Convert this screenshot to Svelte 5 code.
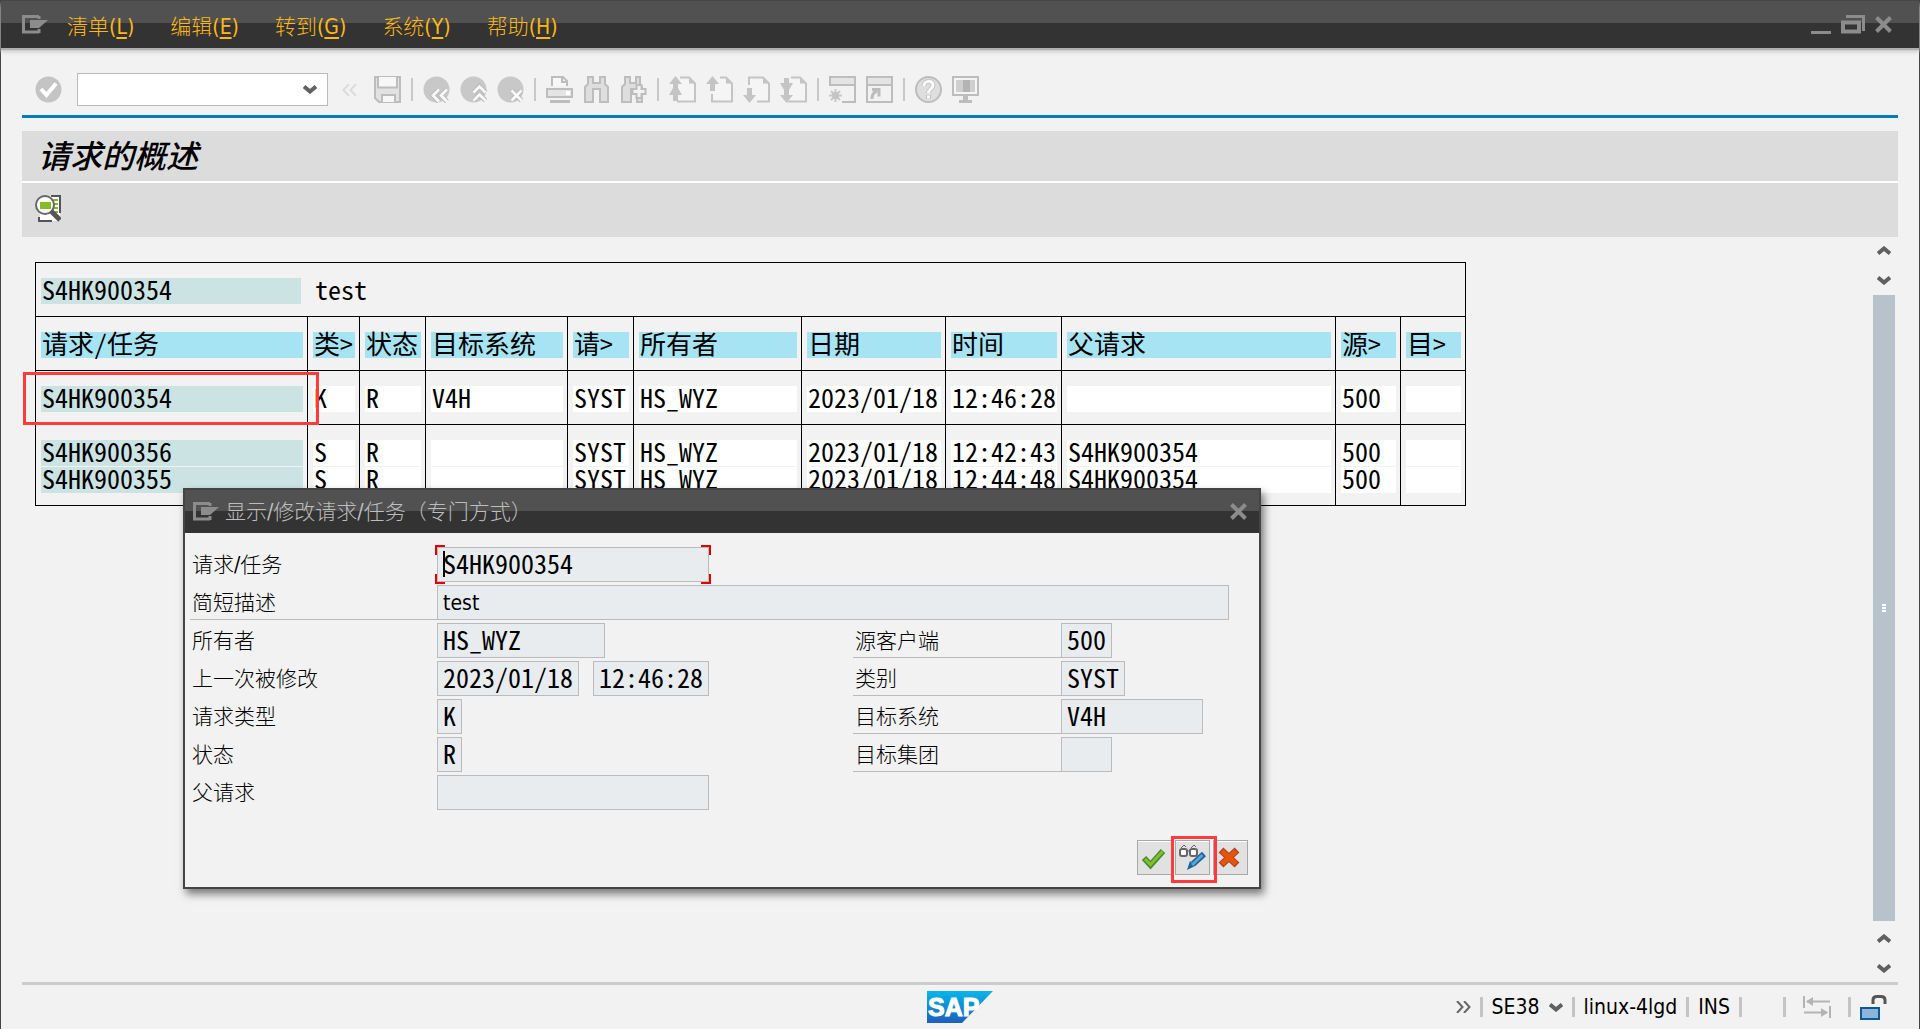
<script>
  const menus = [
    ['清单', 'L'],
    ['编辑', 'E'],
    ['转到', 'G'],
    ['系统', 'Y'],
    ['帮助', 'H'],
  ];

  const tools = [
    'save', '|', 'back', 'exit', 'cancel', '|', 'print', 'find', 'findnext', '|',
    'first', 'prev', 'next', 'last', '|', 'session', 'shortcut', '|', 'help', 'monitor',
  ];

  const toolNames = {
    save: '保存', back: '返回', exit: '退出', cancel: '取消', print: '打印', find: '查找',
    findnext: '继续查找', first: '第一页', prev: '上一页', next: '下一页', last: '最后一页',
    session: '新建会话', shortcut: '快捷方式', help: '帮助', monitor: '定制布局',
  };

  const widths = [272, 52, 66, 142, 66, 168, 144, 116, 274, 65, 65];
  const heads = ['请求/任务', '类>', '状态', '目标系统', '请>', '所有者', '日期', '时间', '父请求', '源>', '目>'];
  const groups = [
    [['S4HK900354', 'K', 'R', 'V4H', 'SYST', 'HS_WYZ', '2023/01/18', '12:46:28', '', '500', '']],
    [
      ['S4HK900356', 'S', 'R', '', 'SYST', 'HS_WYZ', '2023/01/18', '12:42:43', 'S4HK900354', '500', ''],
      ['S4HK900355', 'S', 'R', '', 'SYST', 'HS_WYZ', '2023/01/18', '12:44:48', 'S4HK900354', '500', ''],
    ],
  ];

  let form = $state({
    request: 'S4HK900354', text: 'test', owner: 'HS_WYZ', date: '2023/01/18', time: '12:46:28',
    type: 'K', status: 'R', parent: '', client: '500', category: 'SYST', target: 'V4H', group: '',
  });
</script>

{#snippet chevron(up)}
  <svg class="chevron" viewBox="0 0 14 9" aria-hidden="true">
    {#if up}
      <path d="M1 7.5 7 2.5l6 5" />
    {:else}
      <path d="M1 1.5l6 5 6-5" />
    {/if}
  </svg>
{/snippet}

{#snippet menuIcon()}
  <svg class="menu-icon" viewBox="0 0 26 19" aria-hidden="true">
    <path d="M17 1.5H1.5v15.5H17M17 1v3M17 14v4" fill="none" stroke="#8c8c8c" stroke-width="3" />
    <path d="M8 5h18l-9 8H8z" fill="#8c8c8c" />
  </svg>
{/snippet}

{#snippet closeIcon()}
  <svg class="close-icon" viewBox="0 0 17 17" aria-hidden="true">
    <path d="M1.5 1.5l14 14M15.5 1.5l-14 14" stroke="#8c8c8c" stroke-width="4" />
  </svg>
{/snippet}

{#snippet page()}
  <path d="M11 1.5h9l6 6v18H8" fill="#f5f5f5" stroke="#c4c4c4" stroke-width="2" />
  <path d="M20 1l6.5 6.5H20z" fill="#c4c4c4" />
{/snippet}

{#snippet toolIcon(name)}
  <svg class="tool-icon" viewBox="0 0 27 27" aria-hidden="true">
    {#if name === 'save'}
      <path d="M1 1h25v25H5l-4-4z" fill="#e2e2e2" stroke="#bdbdbd" stroke-width="2" />
      <path d="M4 1v10.5h19V1" fill="#f7f7f7" stroke="#bdbdbd" stroke-width="2" />
      <path d="M8 26v-7h13v7" fill="#f7f7f7" stroke="#bdbdbd" stroke-width="2" />
    {:else if name === 'back' || name === 'exit' || name === 'cancel'}
      <circle cx="13.5" cy="13.5" r="13" fill="#c8c8c8" />
      {#each ['#bdbdbd', '#fafafa'] as tone, i}
        <g fill="none" stroke={tone} stroke-width={i ? 2.6 : 5}>
          {#if name === 'back'}<path d="M16 13.5l-6 6 6 6M24 13.5l-6 6 6 6" />{/if}
          {#if name === 'exit'}<path d="M13.5 16.5l6-6 6 6M13.5 24.5l6-6 6 6" />{/if}
          {#if name === 'cancel'}<path d="M14.5 14.5l10 10M24.5 14.5l-10 10" />{/if}
        </g>
      {/each}
    {:else if name === 'print'}
      <path d="M6 10V1h11l4 4v5M16 1v5h5" fill="#f7f7f7" stroke="#bdbdbd" stroke-width="2" />
      <path d="M1 13h25v8H1z" fill="#e4e4e4" stroke="#bdbdbd" stroke-width="2" />
      <path d="M20 15h4v4h-4z" fill="#fff" />
      <path d="M4 25.5h20" stroke="#bdbdbd" stroke-width="3" />
    {:else if name === 'find'}
      <path d="M5 1h5v6h7V1h5v7l3 3v15h-8V13h-7v13H2V11l3-3z" fill="#dedede" stroke="#bdbdbd" stroke-width="2" />
    {:else if name === 'findnext'}
      <path d="M5 1h5v6h6V1h4v7l2 3v15h-5V13h-6v13H2V11l3-3z" fill="#dedede" stroke="#bdbdbd" stroke-width="2" />
      <path d="M16.5 9h5v4h4v5h-4v4h-5v-4h-4v-5h4z" fill="#f2f2f2" stroke="#bdbdbd" stroke-width="2" />
    {:else if name === 'first'}
      {@render page()}
      <path d="M0 8l6.5-8L13 8H9v4l4 7H9v6H4v-6H0l4-7V8z" fill="#c4c4c4" />
    {:else if name === 'prev'}
      <path d="M14 1.5h6l6 6v18H6V18" fill="#f5f5f5" stroke="#c4c4c4" stroke-width="2" />
      <path d="M20 1l6.5 6.5H20zM0 8l6.5-8L13 8H9v7H4V8z" fill="#c4c4c4" />
    {:else if name === 'next'}
      <path d="M6 9V1.5h14l6 6v18H14" fill="#f5f5f5" stroke="#c4c4c4" stroke-width="2" />
      <path d="M20 1l6.5 6.5H20zM0 19h4v-7h5v7h4l-6.5 8z" fill="#c4c4c4" />
    {:else if name === 'last'}
      {@render page()}
      <path d="M4 2h5v5h4l-4 7v5h4l-6.5 8L0 19h4v-5L0 7h4z" fill="#c4c4c4" />
    {:else if name === 'session'}
      <path d="M1 10V1h25v25H13" fill="none" stroke="#bdbdbd" stroke-width="2" />
      <path d="M2 2h23v6H2z" fill="#e4e4e4" />
      <path d="M1 9h25" stroke="#bdbdbd" stroke-width="2" />
      <path d="M6.5 13v13M0 19.5h13M2 15l9 9M11 15l-9 9" stroke="#c8c8c8" stroke-width="2" />
      <circle cx="6.5" cy="19.5" r="3.5" fill="#c4c4c4" />
    {:else if name === 'shortcut'}
      <path d="M1 1h25v25H1z" fill="#f2f2f2" stroke="#bdbdbd" stroke-width="2" />
      <path d="M2 2h23v6H2z" fill="#e4e4e4" />
      <path d="M1 9h25" stroke="#bdbdbd" stroke-width="2" />
      <path d="M6 23c0-5 2-7 5-8M6 13.5h7v7" fill="none" stroke="#bdbdbd" stroke-width="3" />
    {:else if name === 'help'}
      <circle cx="13.5" cy="13.5" r="12.5" fill="#dedede" stroke="#bdbdbd" stroke-width="2" />
      <path d="M9 10c0-6 9-6 9-1 0 4-4.5 4-4.5 8M13.5 19v4" fill="none" stroke="#c4c4c4" stroke-width="5" />
      <path d="M9 10c0-6 9-6 9-1 0 4-4.5 4-4.5 8M13.5 19.5v3" fill="none" stroke="#fafafa" stroke-width="3" />
    {:else if name === 'monitor'}
      <path d="M1 1h25v18H1z" fill="#f5f5f5" stroke="#bdbdbd" stroke-width="2" />
      <path d="M4 4h19v12H4z" fill="#cfcfcf" />
      <path d="M11 4h7v12h-7z" fill="#b4b4b4" />
      <path d="M11 20h5v4h4v3H7v-3h4z" fill="#bdbdbd" />
    {/if}
  </svg>
{/snippet}

<div class="window">
  <header class="titlebar">
    <button class="bare" aria-label="系统菜单">{@render menuIcon()}</button>
    <nav class="menus">
      {#each menus as [label, key]}
        <button class="bare menu">{label}(<u>{key}</u>)</button>
      {/each}
    </nav>
    <div class="controls">
      <button class="bare" aria-label="最小化">
        <svg class="min-icon" viewBox="0 0 20 20" aria-hidden="true"><path d="M0 17.5h20" stroke="#8c8c8c" stroke-width="3" /></svg>
      </button>
      <button class="bare" aria-label="还原">
        <svg class="restore-icon" viewBox="0 0 24 20" aria-hidden="true">
          <path d="M5 1.5h17.5V16" fill="none" stroke="#8c8c8c" stroke-width="3" />
          <path d="M2 7.5h16v9H2z" fill="none" stroke="#8c8c8c" stroke-width="4" />
        </svg>
      </button>
      <button class="bare" aria-label="关闭">{@render closeIcon()}</button>
    </div>
  </header>

  <div class="toolbar">
    <button class="bare enter" aria-label="回车">
      <svg class="tool-icon" viewBox="0 0 27 27" aria-hidden="true">
        <circle cx="13.5" cy="13.5" r="13" fill="#c4c4c4" />
        <path d="M6 13l5.5 6L21 7.5" fill="none" stroke="#fff" stroke-width="4" />
      </svg>
    </button>
    <div class="command">
      <input aria-label="命令" />
      {@render chevron(false)}
    </div>
    <button class="bare collapse" aria-label="折叠">
      <svg class="collapse-icon" viewBox="0 0 15 12" aria-hidden="true"><path d="M7 0L1.5 6 7 12M14 0L8.5 6l5.5 6" fill="none" stroke="#dcdcdc" stroke-width="2" /></svg>
    </button>
    {#each tools as tool}
      {#if tool === '|'}
        <span class="sep"></span>
      {:else}
        <button class="bare" aria-label={toolNames[tool]}>{@render toolIcon(tool)}</button>
      {/if}
    {/each}
  </div>

  <h1>请求的概述</h1>
  <div class="appbar">
    <button class="bare" aria-label="选择明细">
      <svg class="detail-icon" viewBox="0 0 26 27" aria-hidden="true">
        <path d="M5 1h20v25H5z" fill="#fff" />
        <path d="M16 1h9v17M4 22v4h13" fill="none" stroke="#555" stroke-width="2" />
        <path d="M18 5h5M19 9h4M19 13h4M18 17h5" stroke="#7fba28" stroke-width="2" />
        <circle cx="10" cy="10" r="9" fill="#fff" stroke="#666" stroke-width="2" />
        <path d="M5 7h11v7H5z" fill="#86bc25" />
        <path d="M16 16l9 9" stroke="#555" stroke-width="5" />
      </svg>
    </button>
  </div>

  <main>
    <div class="list">
      <table>
        <colgroup>
          {#each widths as w}
            <col style:width="{w}px" />
          {/each}
        </colgroup>
        <thead>
          <tr class="head">
            <td colspan="11">
              <div class="caption"><span class="cell key">S4HK900354</span><span class="cell">test</span></div>
            </td>
          </tr>
          <tr class="head">
            {#each heads as h}
              <th scope="col"><span class="cell">{h}</span></th>
            {/each}
          </tr>
        </thead>
        {#each groups as rows, g}
          <tbody>
            {#each rows as row}
              <tr>
                {#each row as value, c}
                  <td class:marked={g === 0 && c === 0}><span class="cell" class:key={c === 0}>{value}</span></td>
                {/each}
              </tr>
            {/each}
          </tbody>
        {/each}
      </table>
    </div>
    <div class="scrollbar">
      <button class="bare" aria-label="向上">{@render chevron(true)}</button>
      <button class="bare" aria-label="向下">{@render chevron(false)}</button>
      <div class="thumb"><i></i><i></i><i></i></div>
      <button class="bare" aria-label="上一行">{@render chevron(true)}</button>
      <button class="bare" aria-label="下一行">{@render chevron(false)}</button>
    </div>
  </main>

  <footer>
    <svg class="sap" viewBox="0 0 66 32" role="img" aria-label="SAP">
      <defs>
        <linearGradient id="sap-blue" x1="0" y1="0" x2="0" y2="1">
          <stop offset="0" stop-color="#06b7ec" />
          <stop offset="1" stop-color="#1f5fbb" />
        </linearGradient>
      </defs>
      <path d="M0 0h66L35 32H0z" fill="url(#sap-blue)" />
      <text x="1" y="25" class="sap-text">SAP</text>
    </svg>
    <div class="status">
      <button class="bare more" aria-label="更多">
        <svg class="collapse-icon" viewBox="0 0 15 12" aria-hidden="true"><path d="M1 0l5.5 6L1 12M8 0l5.5 6L8 12" fill="none" stroke="#666" stroke-width="2" /></svg>
      </button>
      <span class="bar"></span>
      <span class="tcode">SE38 {@render chevron(false)}</span>
      <span class="bar"></span>
      <span class="host">linux-4lgd</span>
      <span class="bar"></span>
      <span class="mode">INS</span>
      <span class="bar"></span>
      <span class="blank"></span>
      <span class="bar"></span>
      <span class="transfer">
        <svg class="transfer-icon" viewBox="0 0 28 22" aria-hidden="true">
          <path d="M1 0v12M27 10v12M4 5.5h23M1 16.5h23" stroke="#b4b4b4" stroke-width="2" fill="none" />
          <path d="M3 5.5L10 1v9zM25 16.5L18 12v9z" fill="#b4b4b4" />
        </svg>
      </span>
      <span class="bar"></span>
      <svg class="lock-icon" viewBox="0 0 27 25" aria-hidden="true">
        <path d="M13 9V5c0-2 1-3.5 4-3.5h4c3 0 4 1 4 3.5v4" fill="none" stroke="#555" stroke-width="3" />
        <path d="M1 13h18v11H1z" fill="#8db4da" stroke="#0a5a96" stroke-width="2" />
      </svg>
    </div>
  </footer>

  <div class="dialog" role="dialog" aria-labelledby="dialog-title">
    <div class="dialog-title">
      {@render menuIcon()}
      <span id="dialog-title">显示/修改请求/任务（专门方式）</span>
      <button class="bare" aria-label="关闭对话框">{@render closeIcon()}</button>
    </div>
    <form class="fields">
      <div class="row">
        <label for="f-request">请求/任务</label>
        <span class="focus"><input id="f-request" class="w-long" readonly bind:value={form.request} /><i class="caret"></i></span>
      </div>
      <div class="row lined">
        <label for="f-text">简短描述</label>
        <input id="f-text" class="w-full" readonly bind:value={form.text} />
      </div>
      <div class="row">
        <label for="f-owner">所有者</label>
        <span class="slot"><input id="f-owner" class="w-owner" readonly bind:value={form.owner} /></span>
        <div class="pair"><label for="f-client">源客户端</label><input id="f-client" class="w-three" readonly bind:value={form.client} /></div>
      </div>
      <div class="row">
        <label for="f-date">上一次被修改</label>
        <span class="slot">
          <input id="f-date" class="w-date" readonly bind:value={form.date} />
          <input aria-label="时间" class="w-time" readonly bind:value={form.time} />
        </span>
        <div class="pair"><label for="f-category">类别</label><input id="f-category" class="w-four" readonly bind:value={form.category} /></div>
      </div>
      <div class="row">
        <label for="f-type">请求类型</label>
        <span class="slot"><input id="f-type" class="w-one" readonly bind:value={form.type} /></span>
        <div class="pair"><label for="f-target">目标系统</label><input id="f-target" class="w-date" readonly bind:value={form.target} /></div>
      </div>
      <div class="row">
        <label for="f-status">状态</label>
        <span class="slot"><input id="f-status" class="w-one" readonly bind:value={form.status} /></span>
        <div class="pair"><label for="f-group">目标集团</label><input id="f-group" class="w-three" readonly bind:value={form.group} /></div>
      </div>
      <div class="row">
        <label for="f-parent">父请求</label>
        <input id="f-parent" class="w-long" readonly bind:value={form.parent} />
      </div>
    </form>
    <div class="actions">
      <button aria-label="确认">
        <svg class="action-icon" viewBox="0 0 27 27" aria-hidden="true">
          <path d="M3 14l6.5 7L22 7" fill="none" stroke="#4a8a3a" stroke-width="6" />
          <path d="M4 15l5.5 5.5L21.5 7.5" fill="none" stroke="#7fc31c" stroke-width="3" />
        </svg>
      </button>
      <button class="marked-button" aria-label="显示/修改">
        <svg class="action-icon" viewBox="0 0 27 27" aria-hidden="true">
          <g fill="#fff" stroke="#666" stroke-width="2">
            <rect x="1" y="5" width="7" height="7" rx="2" />
            <rect x="11" y="5" width="7" height="7" rx="2" />
          </g>
          <path d="M2 4l3-3 2 2M12 4l3-3 2 2M8 7h3" fill="none" stroke="#666" stroke-width="1" />
          <path d="M25 10L14 20" stroke="#1a6496" stroke-width="6" />
          <path d="M8 26l3-9 5 5z" fill="#1a6496" />
          <path d="M23.5 11L13 21" stroke="#5fa3d3" stroke-width="3" />
        </svg>
      </button>
      <button aria-label="取消">
        <svg class="action-icon" viewBox="0 0 27 27" aria-hidden="true">
          <path d="M4 6l16 15M20 6L4 21" stroke="#b8401c" stroke-width="7" />
          <path d="M5 7l14 13M19 7L5 20" stroke="#e2560e" stroke-width="5" />
        </svg>
      </button>
    </div>
  </div>
</div>

<style>
  :global(body) {
    margin: 0;
    background: #f2f2f2;
  }

  .window {
    --ui: 'DejaVu Sans Condensed', 'Noto Sans CJK SC', sans-serif;
    --mono: 'Noto Sans Mono CJK SC', 'DejaVu Sans Mono', 'Noto Sans CJK SC', monospace;
    position: relative;
    box-sizing: border-box;
    min-height: 100vh;
    display: flex;
    flex-direction: column;
    border: 1px solid #444;
    border-bottom: 0;
    background: #f2f2f2;
    color: #000;
    font: 21px/24px var(--ui);
  }

  .bare {
    display: flex;
    padding: 0;
    border: 0;
    background: none;
    color: inherit;
    font: inherit;
  }

  svg {
    display: block;
    flex: none;
  }

  .chevron {
    width: 14px;
    height: 9px;
    fill: none;
    stroke: #606060;
    stroke-width: 4;
  }

  .menu-icon {
    width: 26px;
    height: 19px;
  }

  .close-icon {
    width: 17px;
    height: 17px;
  }

  .tool-icon,
  .action-icon {
    width: 27px;
    height: 27px;
  }

  .titlebar {
    display: flex;
    align-items: center;
    height: 47px;
    padding: 0 27px 0 21px;
    background: linear-gradient(#515151 22px, #333 22px);
    box-shadow: 0 2px 1px #b0b0b0, 0 4px 4px #ccc;
    color: #fdb813;
  }

  .menus {
    display: flex;
    gap: 36px;
    flex: 1;
    margin-left: 19px;
    padding-top: 4px;
  }

  .menu {
    display: block;
    font-weight: 300;
  }

  u {
    text-underline-offset: 3px;
  }

  .controls {
    display: flex;
    align-items: center;
    gap: 10px;
  }

  .min-icon {
    width: 20px;
    height: 20px;
  }

  .restore-icon {
    width: 24px;
    height: 20px;
  }

  .toolbar {
    display: flex;
    align-items: center;
    gap: 10px;
    height: 33px;
    margin: 0 21px;
    padding: 25px 0 9px 13px;
    border-bottom: 3px solid #007cc0;
  }

  .command {
    display: flex;
    align-items: center;
    box-sizing: border-box;
    width: 251px;
    height: 33px;
    margin: 0 4px 0 5px;
    padding-right: 10px;
    border: 1px solid #bbb;
    background: #fff;
  }

  .command input {
    flex: 1;
    min-width: 0;
    border: 0;
    outline: 0;
    background: none;
    font: inherit;
  }

  .collapse-icon {
    width: 15px;
    height: 12px;
  }

  .collapse {
    margin-right: 7px;
  }

  .sep {
    width: 2px;
    height: 23px;
    background: #c8c8c8;
  }

  h1 {
    margin: 13px 21px 2px;
    padding: 0 16px 4px;
    background: #dcdcdc;
    box-shadow: 0 2px #fff;
    font: italic 500 32px/46px 'Noto Sans CJK SC', sans-serif;
  }

  .appbar {
    margin: 0 21px;
    padding: 12px 13px 15px;
    background: #dcdcdc;
  }

  .detail-icon {
    width: 26px;
    height: 27px;
  }

  main {
    display: flex;
    flex: 1;
    justify-content: space-between;
    margin: 0 21px;
    border-bottom: 3px solid #ccc;
  }

  .list {
    padding: 25px 0 0 13px;
  }

  table {
    width: 1431px;
    table-layout: fixed;
    border-collapse: separate;
    border-spacing: 0;
    border-right: 1px solid #000;
    border-bottom: 1px solid #000;
    font: 26px/22px var(--mono);
  }

  td,
  th {
    position: relative;
    padding: 0 4px 1px 5px;
    border-left: 1px solid #000;
    font-weight: 400;
    text-align: left;
  }

  th {
    font-weight: 300;
  }

  .head td,
  .head th,
  tbody tr:first-child td {
    padding-top: 15px;
    border-top: 1px solid #000;
  }

  .head td,
  .head th,
  tbody tr:last-child td {
    padding-bottom: 12px;
  }

  .cell {
    display: block;
    height: 26px;
    padding: 0 0 0 1px;
    white-space: nowrap;
  }

  th .cell {
    background: #a6e4f3;
  }

  tbody .cell {
    background: #fff;
  }

  .cell.key,
  tbody .cell.key {
    background: #cbe3e3;
  }

  .caption {
    display: flex;
    gap: 13px;
  }

  .caption .key {
    width: 259px;
  }

  .marked::after {
    content: '';
    position: absolute;
    z-index: 1;
    inset: 1px -12px -1px -13px;
    border: 3px solid #ff3b3b;
  }

  .scrollbar {
    display: flex;
    flex-direction: column;
    align-items: center;
    gap: 21px;
    width: 22px;
    margin-right: 3px;
    padding: 9px 0;
  }

  .thumb {
    display: flex;
    flex: 1;
    flex-direction: column;
    align-items: center;
    justify-content: center;
    gap: 1px;
    width: 22px;
    margin: -11px 0 -8px;
    background: #b7c2cc;
  }

  .thumb i {
    width: 4px;
    height: 2px;
    background: #fff;
  }

  footer {
    display: grid;
    grid-template-columns: 1fr auto 1fr;
    align-items: center;
    height: 44px;
    padding: 0 32px;
  }

  .sap {
    grid-column: 2;
    width: 66px;
    height: 32px;
  }

  .sap-text {
    fill: #fff;
    stroke: #fff;
    stroke-width: 1px;
    font: 700 25px 'Liberation Sans', sans-serif;
  }

  .status {
    display: flex;
    align-items: center;
    justify-content: flex-end;
    gap: 9px;
    white-space: nowrap;
  }

  .bar {
    width: 3px;
    height: 20px;
    background: #c4c4c4;
  }

  .tcode {
    display: flex;
    align-items: center;
    gap: 9px;
  }

  .blank {
    width: 23px;
  }

  .transfer {
    padding: 0 8px;
  }

  .transfer-icon {
    width: 28px;
    height: 22px;
  }

  .lock-icon {
    width: 27px;
    height: 25px;
  }

  .dialog {
    position: absolute;
    z-index: 2;
    top: 487px;
    left: 182px;
    box-sizing: border-box;
    width: 1078px;
    border: 2px solid #444;
    background: #f2f2f2;
    box-shadow: 3px 5px 8px rgb(0 0 0 / 50%);
  }

  .dialog-title {
    display: flex;
    align-items: center;
    height: 43px;
    padding: 0 12px 0 8px;
    background: linear-gradient(#515151 21px, #333 21px);
    color: #bdbdbd;
    font-weight: 300;
  }

  .dialog-title span {
    flex: 1;
    margin-left: 6px;
  }

  .fields {
    display: flex;
    flex-direction: column;
    gap: 3px;
    padding: 14px 28px 0 5px;
    font-weight: 300;
  }

  .row,
  .pair {
    display: flex;
  }

  .row > label,
  .pair label {
    box-sizing: border-box;
    height: 35px;
    padding: 6px 0 0 2px;
  }

  .row > label {
    width: 247px;
  }

  .pair label {
    width: 208px;
  }

  .lined > label,
  .pair label {
    border-bottom: 1px solid #bbb;
  }

  .slot {
    display: flex;
    gap: 14px;
    width: 416px;
  }

  .fields input {
    box-sizing: border-box;
    height: 35px;
    margin: 0;
    padding: 0 0 5px 5px;
    border: 1px solid #bbb;
    border-radius: 0;
    outline: 0;
    background: #e8ecef;
    color: #000;
    font: 26px/28px var(--mono);
  }

  .fields .w-full {
    width: 792px;
    padding-bottom: 0;
    font: 21px/32px var(--ui);
  }

  .w-long { width: 272px; }
  .w-owner { width: 168px; }
  .w-date { width: 142px; }
  .w-time { width: 116px; }
  .w-one { width: 25px; }
  .w-three { width: 51px; }
  .w-four { width: 64px; }

  .focus {
    position: relative;
    display: flex;
  }

  .focus::before {
    content: '';
    position: absolute;
    inset: -2px;
    background:
      linear-gradient(#e30000, #e30000) 0 0 / 10px 2px,
      linear-gradient(#e30000, #e30000) 0 0 / 2px 10px,
      linear-gradient(#e30000, #e30000) 100% 0 / 10px 2px,
      linear-gradient(#e30000, #e30000) 100% 0 / 2px 10px,
      linear-gradient(#e30000, #e30000) 0 100% / 10px 2px,
      linear-gradient(#e30000, #e30000) 0 100% / 2px 10px,
      linear-gradient(#e30000, #e30000) 100% 100% / 10px 2px,
      linear-gradient(#e30000, #e30000) 100% 100% / 2px 10px;
    background-repeat: no-repeat;
    pointer-events: none;
  }

  .caret {
    position: absolute;
    top: 4px;
    left: 6px;
    width: 2px;
    height: 26px;
    background: #000;
  }

  .actions {
    display: flex;
    justify-content: flex-end;
    gap: 3px;
    padding: 30px 11px 12px;
  }

  .actions button {
    position: relative;
    display: flex;
    align-items: center;
    justify-content: center;
    width: 35px;
    height: 35px;
    padding: 0;
    border: 1px solid #a8a8a8;
    background: #e1e1e1;
    box-shadow: inset 0 1px #fff;
  }

  .marked-button::after {
    content: '';
    position: absolute;
    z-index: 1;
    inset: -5px -8px -9px -5px;
    border: 3px solid #ff3b3b;
  }
</style>
